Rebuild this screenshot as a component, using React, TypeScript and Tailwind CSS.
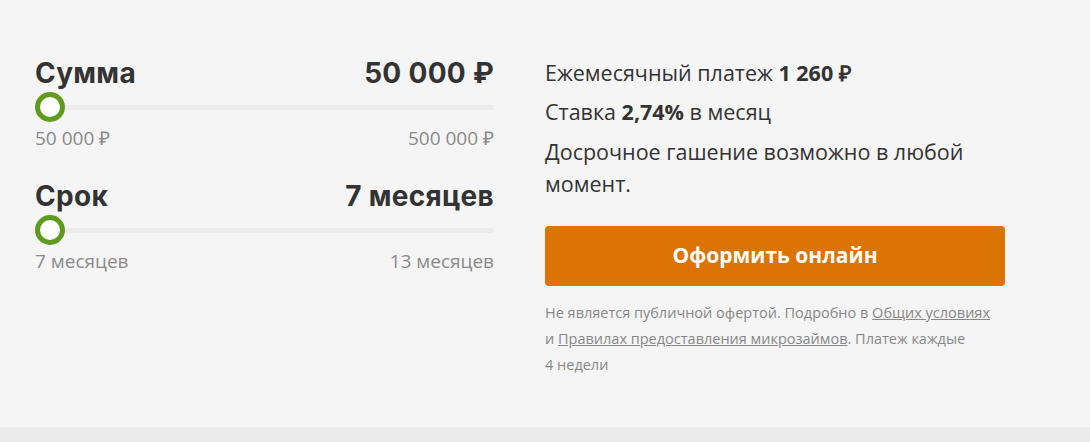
import React from 'react';

const heading = { fontFamily: 'Inter, "Open Sans", sans-serif' };

function RangeBlock({ label, value, min, max }: { label: string; value: string; min: string; max: string }) {
  return (
    <div className="flex flex-col">
      <div className="flex items-center justify-between h-[30px]">
        <span className="text-[28px] font-bold text-[#333] leading-none tracking-[0.3px]" style={heading}>{label}</span>
        <span className="text-[28px] font-bold text-[#333] leading-none tracking-[0.3px]" style={heading}>{value}</span>
      </div>
      <div className="relative h-[30px] mt-[4px] flex items-center">
        <div className="w-full h-[5px] rounded-full bg-[#ebebeb]" />
        <div className="absolute left-0 top-0 w-[30px] h-[30px] rounded-full border-[5px] border-[#5f9c1e] bg-white" />
      </div>
      <div className="flex justify-between text-[19px] text-[#8a8a8a] mt-[4px] leading-[24px]">
        <span>{min}</span>
        <span>{max}</span>
      </div>
    </div>
  );
}

export default function App() {
  return (
    <div className="w-full" style={{ fontFamily: '"Open Sans", sans-serif' }}>
      <div className="bg-[#f5f5f5] h-[427px] flex pt-[58px] pl-[35px]">
        <div className="w-[459px] flex flex-col gap-[31px]">
          <RangeBlock label="Сумма" value="50 000 ₽" min="50 000 ₽" max="500 000 ₽" />
          <RangeBlock label="Срок" value="7 месяцев" min="7 месяцев" max="13 месяцев" />
        </div>
        <div className="w-[460px] ml-[51px] flex flex-col">
          <div className="text-[21.5px] text-[#333] leading-[32px] -mt-[1px]">
            <p>Ежемесячный платеж <b>1 260 ₽</b></p>
            <p className="mt-[7px]">Ставка <b>2,74%</b> в месяц</p>
            <p className="mt-[8px]">Досрочное гашение возможно в любой момент.</p>
          </div>
          <button className="mt-[26px] h-[60px] w-full rounded-[4px] bg-[#dc7305] text-white text-[21px] font-bold">
            Оформить онлайн
          </button>
          <p className="mt-[14px] text-[14.5px] leading-[26px] text-[#888]">
            Не является публичной офертой. Подробно в <a href="#" className="underline">Общих условиях</a>
            <br />
            и <a href="#" className="underline">Правилах предоставления микрозаймов</a>. Платеж каждые
            <br />
            4 недели
          </p>
        </div>
      </div>
      <div className="bg-[#ebebeb] h-[15px]" />
    </div>
  );
}
